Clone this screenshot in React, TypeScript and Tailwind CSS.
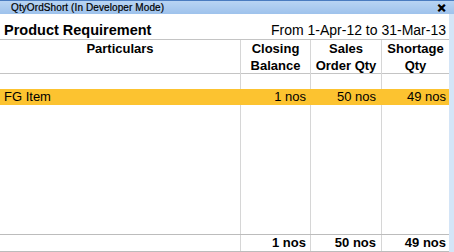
import React from "react";

const font = { fontFamily: '"Liberation Sans", Arial, sans-serif' };

const cols = "grid grid-cols-[240px_70px_71px_68px]";
const cell = "border-l border-[#d6d6d6]";

export default function App() {
  return (
    <div className="w-[454px] h-[252px] bg-white flex flex-col overflow-hidden text-black" style={font}>
      {/* Title bar */}
      <div className="h-[14px] shrink-0 flex items-center justify-between bg-gradient-to-b from-[#b8d4f3] to-[#9ec2ec] border-t border-[#4a7cc0] pl-[11px] pr-[8px]">
        <span className="text-[10px] leading-[12px] tracking-[0.1px] [-webkit-text-stroke:0.2px_black]">QtyOrdShort (In Developer Mode)</span>
        <span className="text-[11px] leading-[12px] font-bold [-webkit-text-stroke:0.6px_black]">✕</span>
      </div>
      <div className="flex-1 flex">
        <div className="w-[449px] flex flex-col">
          {/* Report header */}
          <div className="h-[26px] shrink-0 flex items-end justify-between pl-[4px] pr-[3px] pb-[1px] border-b border-[#c4c4c4]">
            <span className="text-[14.5px] leading-[16px] font-bold">Product Requirement</span>
            <span className="text-[14px] leading-[16px]">From 1-Apr-12 to 31-Mar-13</span>
          </div>
          {/* Column header */}
          <div className={`${cols} h-[34px] shrink-0 border-b border-[#c4c4c4] text-[13px] leading-[17px] font-bold`}>
            <div className="text-center">Particulars</div>
            <div className={`${cell} text-center`}>Closing<br />Balance</div>
            <div className={`${cell} text-center`}>Sales<br />Order Qty</div>
            <div className={`${cell} text-center`}>Shortage<br />Qty</div>
          </div>
          {/* spacer */}
          <div className={`${cols} h-[15px] shrink-0`}>
            <div />
            <div className={cell} />
            <div className={cell} />
            <div className={cell} />
          </div>
          {/* item row */}
          <div className={`${cols} h-[16px] shrink-0 bg-[#fcc330] text-[13px] leading-[16px]`}>
            <div className="pl-[4px]">FG Item</div>
            <div className="border-l border-transparent text-right pr-[4px]">1 nos</div>
            <div className="border-l border-transparent text-right pr-[5px]">50 nos</div>
            <div className="border-l border-transparent text-right pr-[3px]">49 nos</div>
          </div>
          {/* filler */}
          <div className={`${cols} flex-1`}>
            <div />
            <div className={cell} />
            <div className={cell} />
            <div className={cell} />
          </div>
          {/* totals */}
          <div className={`${cols} h-[18px] shrink-0 border-t border-b border-[#bcbcbc] text-[13px] leading-[16px] font-bold`}>
            <div />
            <div className={`${cell} text-right pr-[4px]`}>1 nos</div>
            <div className={`${cell} text-right pr-[5px]`}>50 nos</div>
            <div className={`${cell} text-right pr-[3px]`}>49 nos</div>
          </div>
        </div>
        <div className="w-[5px] bg-[#d4e5f7]" />
      </div>
    </div>
  );
}
